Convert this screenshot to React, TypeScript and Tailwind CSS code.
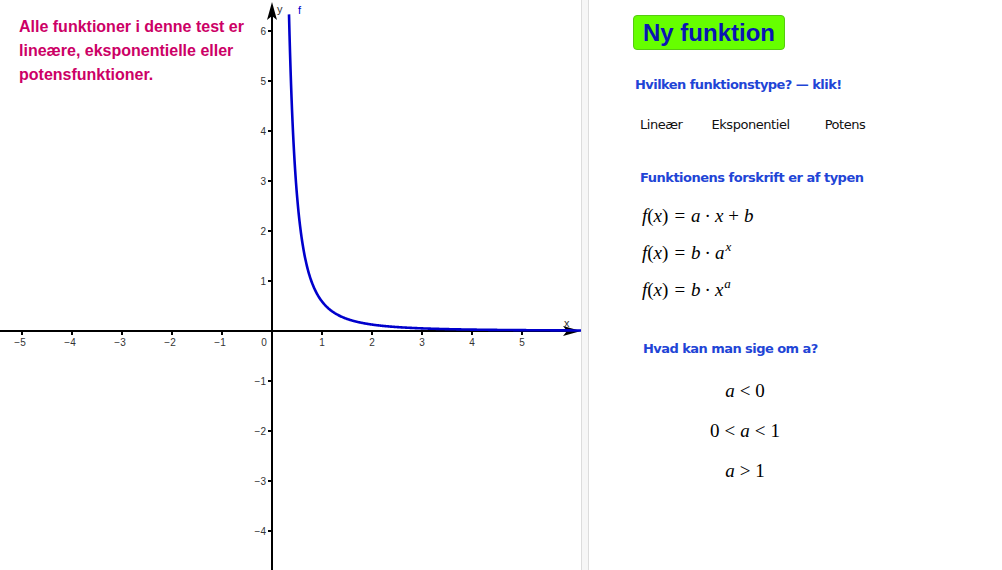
import React from "react";

const OX = 272;
const OY = 331;
const S = 50;

function curvePath(): string {
  const pts: string[] = [];
  const b = 0.59;
  const a = -2.2;
  for (let px = 286; px <= 582; px += 0.5) {
    const xv = (px - OX) / S;
    const yv = b * Math.pow(xv, a);
    const py = OY - yv * S;
    if (py < -5) continue;
    pts.push(`${pts.length === 0 ? "M" : "L"}${px.toFixed(2)},${py.toFixed(2)}`);
  }
  return pts.join(" ");
}

function Graph() {
  const xs = [-5, -4, -3, -2, -1, 1, 2, 3, 4, 5];
  const ys = [6, 5, 4, 3, 2, 1, -1, -2, -3, -4];
  const lbl = (n: number) => (n < 0 ? `\u2212${-n}` : `${n}`);
  return (
    <svg width="581" height="570" viewBox="0 0 581 570" className="block">
      <rect x="0" y="0" width="581" height="570" fill="#ffffff" />
      <line x1="0" y1={OY} x2="572" y2={OY} stroke="#000" strokeWidth="2" />
      <path d={`M581,${OY} L563,${OY - 5} L567,${OY} L563,${OY + 5} Z`} fill="#000" />
      <line x1={OX} y1="570" x2={OX} y2="10" stroke="#000" strokeWidth="2" />
      <path d={`M${OX},2 L${OX - 5},20 L${OX},16 L${OX + 5},20 Z`} fill="#000" />
      {xs.map((n) => (
        <g key={`x${n}`}>
          <line x1={OX + n * S} y1={OY} x2={OX + n * S} y2={OY + 4} stroke="#000" strokeWidth="2" />
          <text
            x={OX + n * S - (n < 0 ? 2 : 0)}
            y={OY + 15}
            fontSize="10"
            fontFamily="'Liberation Sans', Arial, sans-serif"
            fill="#333"
            textAnchor="middle"
          >
            {lbl(n)}
          </text>
        </g>
      ))}
      {ys.map((n) => (
        <g key={`y${n}`}>
          <line x1={OX - 4} y1={OY - n * S} x2={OX} y2={OY - n * S} stroke="#000" strokeWidth="2" />
          <text
            x={OX - 6}
            y={OY - n * S + 3.5}
            fontSize="10"
            fontFamily="'Liberation Sans', Arial, sans-serif"
            fill="#333"
            textAnchor="end"
          >
            {lbl(n)}
          </text>
        </g>
      ))}
      <text x={OX - 8} y={OY + 15} fontSize="10" fontFamily="'Liberation Sans', Arial, sans-serif" fill="#333" textAnchor="middle">
        0
      </text>
      <text x="564" y="327" fontSize="11" fontFamily="'Liberation Sans', Arial, sans-serif" fill="#333">
        x
      </text>
      <text x="277" y="13" fontSize="11" fontFamily="'Liberation Sans', Arial, sans-serif" fill="#333">
        y
      </text>
      <text x="298" y="14" fontSize="11" fontFamily="'Liberation Sans', Arial, sans-serif" fill="#0000cc">
        f
      </text>
      <path d={curvePath()} fill="none" stroke="#0000cc" strokeWidth="2.6" strokeLinejoin="round" />
    </svg>
  );
}

const mathFont = { fontFamily: "'Liberation Serif', 'Times New Roman', serif" };

function M({ children }: { children: React.ReactNode }) {
  return <span className="italic">{children}</span>;
}

function Op({ children, w }: { children: React.ReactNode; w: "eq" | "dot" | "plus" }) {
  const cls = w === "eq" ? "mx-[6px]" : w === "plus" ? "mx-[5px]" : "mx-[4px]";
  return <span className={cls}>{children}</span>;
}

export default function App() {
  return (
    <div className="flex w-[1002px] h-[570px] overflow-hidden bg-white">
      <div className="relative w-[581px] h-[570px] shrink-0">
        <Graph />
        <div className="absolute left-[19px] top-[15px] w-[270px] text-[16px] leading-[24px] font-bold text-[#cc0066] font-['Liberation_Sans',Arial,sans-serif]">
          Alle funktioner i denne test er
          <br />
          lineære, eksponentielle eller
          <br />
          potensfunktioner.
        </div>
      </div>
      <div className="w-[8px] h-[570px] shrink-0 bg-[#f6f6f6] border-x border-[#dcdcdc]" />
      <div className="flex flex-col flex-1 h-[570px] font-['DejaVu_Sans',sans-serif]">
        <div className="ml-[44px] mt-[15px] w-[152px] h-[35px] rounded-[4px] bg-[#66ff00] border border-[#55cc11] flex items-center justify-center text-[24px] font-bold text-[#0a14b4] font-['Liberation_Sans',Arial,sans-serif]">
          Ny funktion
        </div>
        <div className="ml-[46px] mt-[26px] text-[13px] leading-[18px] font-bold text-[#1f45d6] tracking-[-0.55px]">
          Hvilken funktionstype? — klik!
        </div>
        <div className="flex mt-[22px] text-[13px] leading-[18px] text-[#111] tracking-[-0.45px]">
          <span className="ml-[51px]">Lineær</span>
          <span className="ml-[29px]">Eksponentiel</span>
          <span className="ml-[35px]">Potens</span>
        </div>
        <div className="ml-[51px] mt-[35px] text-[13px] leading-[18px] font-bold text-[#1f45d6] tracking-[-0.5px]">
          Funktionens forskrift er af typen
        </div>
        <div className="ml-[53px] mt-[20px] flex flex-col gap-[19px] text-[19px] leading-[18px] text-[#000]" style={mathFont}>
          <div>
            <M>f</M>(<M>x</M>)<Op w="eq">=</Op>
            <M>a</M>
            <Op w="dot">·</Op>
            <M>x</M>
            <Op w="plus">+</Op>
            <M>b</M>
          </div>
          <div>
            <M>f</M>(<M>x</M>)<Op w="eq">=</Op>
            <M>b</M>
            <Op w="dot">·</Op>
            <M>a</M>
            <sup className="italic text-[13px] relative -top-[8px] ml-[1px]">x</sup>
          </div>
          <div>
            <M>f</M>(<M>x</M>)<Op w="eq">=</Op>
            <M>b</M>
            <Op w="dot">·</Op>
            <M>x</M>
            <sup className="italic text-[13px] relative -top-[8px] ml-[1px]">a</sup>
          </div>
        </div>
        <div className="ml-[54px] mt-[41px] text-[13px] leading-[18px] font-bold text-[#1f45d6] tracking-[-0.55px]">
          Hvad kan man sige om a?
        </div>
        <div className="w-[312px] flex flex-col items-center mt-[24px] gap-[22px] text-[19px] leading-[18px] text-[#000]" style={mathFont}>
          <div>
            <M>a</M>
            <span className="mx-[5px]">&lt;</span>0
          </div>
          <div>
            0<span className="mx-[5px]">&lt;</span>
            <M>a</M>
            <span className="mx-[5px]">&lt;</span>1
          </div>
          <div>
            <M>a</M>
            <span className="mx-[5px]">&gt;</span>1
          </div>
        </div>
      </div>
    </div>
  );
}
